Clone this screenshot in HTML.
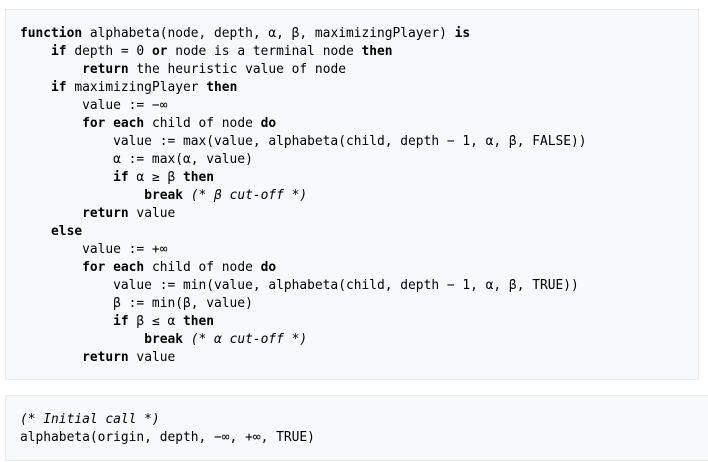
<!DOCTYPE html>
<html><head><meta charset="utf-8"><style>
html,body{margin:0;padding:0;background:#fff;width:708px;height:462px;overflow:hidden}
pre{position:absolute;margin:0;background:#f8f9fa;border:1px solid #eaecf0;color:#000;
font-family:"DejaVu Sans Mono","Liberation Mono",monospace;font-size:12.9px;line-height:18px;
padding:15px 14px 11px 14px;box-sizing:border-box;white-space:pre}
#a{left:5px;top:9px;width:694px;height:371px}
#b{left:5px;top:395px;width:710px;height:66px}
b{font-weight:bold}
</style></head><body>
<pre id="a"><b>function</b> alphabeta(node, depth, α, β, maximizingPlayer) <b>is</b>
    <b>if</b> depth = 0 <b>or</b> node is a terminal node <b>then</b>
        <b>return</b> the heuristic value of node
    <b>if</b> maximizingPlayer <b>then</b>
        value := −∞
        <b>for each</b> child of node <b>do</b>
            value := max(value, alphabeta(child, depth − 1, α, β, FALSE))
            α := max(α, value)
            <b>if</b> α ≥ β <b>then</b>
                <b>break</b> <i>(* β cut-off *)</i>
        <b>return</b> value
    <b>else</b>
        value := +∞
        <b>for each</b> child of node <b>do</b>
            value := min(value, alphabeta(child, depth − 1, α, β, TRUE))
            β := min(β, value)
            <b>if</b> β ≤ α <b>then</b>
                <b>break</b> <i>(* α cut-off *)</i>
        <b>return</b> value</pre>
<pre id="b"><i>(* Initial call *)</i>
alphabeta(origin, depth, −∞, +∞, TRUE)</pre>
</body></html>
